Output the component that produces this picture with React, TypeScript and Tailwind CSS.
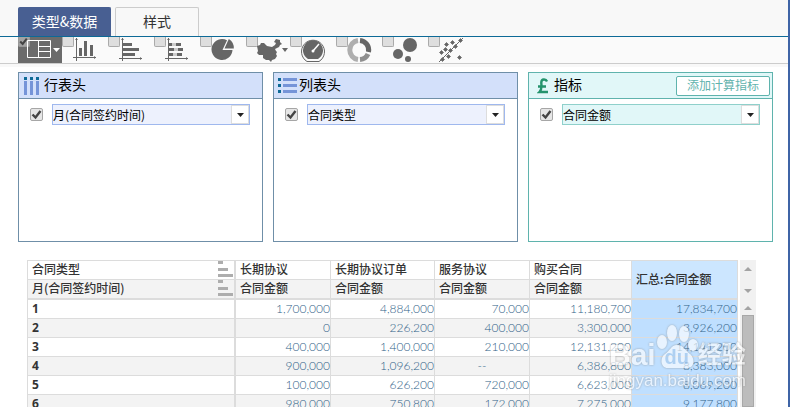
import { useState } from 'react'
import type { ReactNode } from 'react'

const BAR = '#666'

interface ChartType {
  id: string
  label: string
  width: string
  icon: ReactNode
}

const chartTypes: ChartType[] = [
  {
    id: 'table',
    label: '表格',
    width: 'w-11',
    icon: (
      <svg width="34" height="26" viewBox="0 0 34 26" className="ml-[9px]">
        <path d="M.5 3.5h23v17H.5zM11.5 3.500v17M11.5 9.5h12M11.5 14.5h12" fill="none" stroke="#fff" />
        <path d="M26 11h7l-3.500 4z" fill="#fff" />
      </svg>
    ),
  },
  {
    id: 'column',
    label: '柱状图',
    width: 'w-[46px]',
    icon: (
      <svg width="24" height="26" viewBox="0 0 24 26" className="ml-[11px]">
        <path d="M3.5 1v23M0 20.5h23" stroke={BAR} fill="none" />
        <path d="M6 11h3v8H6zM11 4h3v15h-3zM17 8h3v11h-3z" fill={BAR} />
        <path d="M2 3l1.5-2L5 3zM21 19l2 1.5-2 1.5z" fill={BAR} />
      </svg>
    ),
  },
  {
    id: 'bar',
    label: '条形图',
    width: 'w-[46px]',
    icon: (
      <svg width="24" height="26" viewBox="0 0 24 26" className="ml-[11px]">
        <path d="M3.5 1v23M0 21.5h23" stroke={BAR} fill="none" />
        <path d="M4 6h9v3H4zM4 11h16v3H4zM4 16h12v3H4z" fill={BAR} />
        <path d="M2 3l1.5-2L5 3zM21 20l2 1.5-2 1.5z" fill={BAR} />
      </svg>
    ),
  },
  {
    id: 'stacked',
    label: '堆积图',
    width: 'w-[46px]',
    icon: (
      <svg width="24" height="26" viewBox="0 0 24 26" className="ml-[11px]">
        <path d="M3.5 1v23M0 21.5h23" stroke={BAR} fill="none" />
        <path d="M4 6h3v3H4zM11 6h5v3h-5zM4 11h5v3H4zM13 11h5v3h-5zM4 16h4v3H4zM12 16h5v3h-5z" fill={BAR} />
        <path d="M7 6h4v3H7zM9 11h4v3H9zM8 16h4v3H8z" fill="#ccc" />
        <path d="M2 3l1.5-2L5 3zM21 20l2 1.5-2 1.5z" fill={BAR} />
      </svg>
    ),
  },
  {
    id: 'pie',
    label: '饼图',
    width: 'w-[46px]',
    icon: (
      <svg width="24" height="26" viewBox="0 0 24 26" className="ml-[11px]">
        <path d="M11.5 13L16 3.2A10.500 10.500 0 1 0 21.500 13z" fill={BAR} />
        <path d="M13.5 11.5L17.8 2A10.500 10.500 0 0 1 22.800 11.500z" fill={BAR} />
      </svg>
    ),
  },
  {
    id: 'map',
    label: '地图',
    width: 'w-11',
    icon: (
      <svg width="31" height="26" viewBox="0 0 31 26" className="ml-[11px]">
        <path
          d="M0 9l3-1 1-2 3 0 3 3 5 1 3-2 1-2-2-1 2-3 4 1 0 2 2 2-2 1-1 2-4 2 1 2 1 1-1 2 1 2-2 3-3 1-1 2-2-2-3 0-3-2 0-3-4 0-2-2 1-2z"
          fill={BAR}
        />
        <path d="M25 11h6l-3 4z" fill={BAR} />
      </svg>
    ),
  },
  {
    id: 'gauge',
    label: '仪表盘',
    width: 'w-[46px]',
    icon: (
      <svg width="26" height="26" viewBox="0 0 26 26" className="ml-[11px]">
        <path d="M6 24.500A11.500 11.500 0 1 1 18 24.500z" fill="#fafafa" stroke={BAR} />
        <path d="M7 22A10 10 0 1 1 17 22z" fill={BAR} />
        <path d="M12 14L18 7" stroke="#fff" strokeWidth="1.5" />
        <circle cx="12" cy="14" r="1.5" fill="#fff" />
      </svg>
    ),
  },
  {
    id: 'ring',
    label: '环形图',
    width: 'w-[46px]',
    icon: (
      <svg width="26" height="26" viewBox="0 0 26 26" className="ml-[11px]">
        <path d="M11 3.5A9.600 9.600 0 0 0 11 22.500" fill="none" stroke="#aeaeae" strokeWidth="5" />
        <path d="M13 3.500A9.600 9.600 0 0 1 21.500 15" fill="none" stroke={BAR} strokeWidth="5" />
        <path d="M21 17A9.600 9.600 0 0 1 13 22.500" fill="none" stroke="#8f8f8f" strokeWidth="5" />
      </svg>
    ),
  },
  {
    id: 'bubble',
    label: '气泡图',
    width: 'w-[46px]',
    icon: (
      <svg width="26" height="26" viewBox="0 0 26 26" className="ml-[11px]">
        <circle cx="17" cy="8" r="7" fill={BAR} />
        <circle cx="5" cy="17" r="5" fill={BAR} />
        <circle cx="15" cy="22" r="3" fill={BAR} />
      </svg>
    ),
  },
  {
    id: 'scatter',
    label: '散点图',
    width: 'w-[46px]',
    icon: (
      <svg width="26" height="26" viewBox="0 0 26 26" className="ml-[11px]">
        <path d="M0 25L24 1" stroke={BAR} />
        <path
          d="M7.500 5.500l2 2-2 2-2-2zM13.500 3.500l2 2-2 2-2-2zM21.500 1.500l2 2-2 2-2-2zM16.500 7.500l2 2-2 2-2-2zM11.500 11.500l2 2-2 2-2-2zM6.500 10.500l2 2-2 2-2-2zM2.500 13.500l2 2-2 2-2-2zM9.500 17.500l2 2-2 2-2-2zM3.500 20.500l2 2-2 2-2-2zM20.500 18.500l2 2-2 2-2-2z"
          fill={BAR}
          stroke={BAR}
          strokeWidth=".7"
        />
      </svg>
    ),
  },
]

const columns = ['长期协议', '长期协议订单', '服务协议', '购买合同']

const rows = [
  ['1,700,000', '4,884,000', '70,000', '11,180,700', '17,834,700'],
  ['0', '226,200', '400,000', '3,300,000', '3,926,200'],
  ['400,000', '1,400,000', '210,000', '12,131,200', '14,141,200'],
  ['900,000', '1,096,200', '--', '6,386,800', '8,383,000'],
  ['100,000', '626,200', '720,000', '6,623,000', '8,069,200'],
  ['980,000', '750,800', '172,000', '7,275,000', '9,177,800'],
]

function CheckMark({ className }: { className: string }) {
  return (
    <svg viewBox="0 0 11 11" className={className}>
      <path d="M1.5 5.500l3 3L9.500 2" fill="none" stroke="#444" strokeWidth="2.400" />
    </svg>
  )
}

function ChartToolbar() {
  const [selected, setSelected] = useState('table')

  return (
    <div className="flex h-[27px] shrink-0 border-b border-[#ccc] bg-[#fafafa] pl-[18px]">
      {chartTypes.map((type) => {
        const active = selected === type.id
        return (
          <label
            key={type.id}
            title={type.label}
            className={`relative block h-[26px] shrink-0 ${type.width} ${active ? 'bg-[#6b6b6b]' : ''}`}
          >
            <input
              type="checkbox"
              aria-label={type.label}
              checked={active}
              onChange={() => setSelected(type.id)}
              className={`absolute top-0 left-0 h-[10px] w-3 appearance-none rounded-b-xs border border-t-0 ${
                active ? 'border-[#999] bg-[#a3a3a3]' : 'border-[#aaa] bg-[#dedede]'
              }`}
            />
            {active && <CheckMark className="pointer-events-none absolute top-0 left-0 h-[9px] w-[11px]" />}
            <span className="relative block">{type.icon}</span>
          </label>
        )
      })}
    </div>
  )
}

function RowIcon() {
  return (
    <svg width="17" height="20" viewBox="0 0 17 20">
      <path d="M2.500 5v14M8.500 5v14M14.500 5v14" stroke="#7594d8" strokeWidth="3" />
      <path d="M1 1h3v3H1zM7 1h3v3H7zM13 1h3v3h-3z" fill="#0d6a97" />
    </svg>
  )
}

function ColumnIcon() {
  return (
    <svg width="20" height="20" viewBox="0 0 20 20">
      <path d="M5 3.500h14M5 9.500h14M5 15.500h14" stroke="#7594d8" strokeWidth="3" />
      <path d="M0 2h3v3H0zM0 8h3v3H0zM0 14h3v3H0z" fill="#0d6a97" />
    </svg>
  )
}

function PoundIcon() {
  return (
    <svg width="12" height="16" viewBox="0 0 12 16">
      <path
        d="M10 3.500C9 .8 4.300.6 4.300 4.500c0 3 1.200 6.500-1.800 9.500H11M1 8.500h8"
        fill="none"
        stroke="#23936c"
        strokeWidth="2.400"
      />
    </svg>
  )
}

interface FieldPanelProps {
  title: string
  field: string
  icon: ReactNode
  tone?: 'blue' | 'teal'
  action?: ReactNode
}

function FieldPanel({ title, field, icon, tone = 'blue', action }: FieldPanelProps) {
  const teal = tone === 'teal'
  const [enabled, setEnabled] = useState(true)

  return (
    <section className={`h-[170px] border bg-white ${teal ? 'border-[#5fb3ad]' : 'border-[#6f8fa8]'}`}>
      <header
        className={`flex h-[26px] items-center border-b pr-[2px] ${
          teal ? 'border-[#5fb3ad] bg-[#e1f7f8]' : 'border-[#6f8fa8] bg-[#d3e0fa]'
        }`}
      >
        <span className={`flex w-[25px] ${teal ? 'pl-2' : 'pl-1'}`}>{icon}</span>
        <h2 className="flex-1 pb-[3px] text-sm leading-5 text-black">{title}</h2>
        {action}
      </header>
      <div className="flex items-center pt-[5px] pr-3 pl-[11px]">
        <span className="relative mr-[9px] h-[13px] w-[13px] shrink-0">
          <input
            type="checkbox"
            aria-label={`启用${field}`}
            checked={enabled}
            onChange={(e) => setEnabled(e.target.checked)}
            className="block h-[13px] w-[13px] appearance-none rounded-xs border border-[#a6a6a6] bg-[#e6e6e6]"
          />
          {enabled && <CheckMark className="pointer-events-none absolute inset-px h-[11px] w-[11px]" />}
        </span>
        <span className="relative flex-1">
          <select
            aria-label={title}
            className={`block h-[21px] w-full appearance-none border text-xs text-black ${
              teal ? 'border-[#8fd0cb] bg-[#e1f7f8]' : 'border-[#9fb8ee] bg-[#edf1fd]'
            }`}
          >
            <option>{field}</option>
          </select>
          <span className="pointer-events-none absolute inset-y-px right-px flex w-[18px] items-center justify-center border border-[#ddd] bg-white">
            <svg width="7" height="4" viewBox="0 0 7 4">
              <path d="M0 0h7L3.500 4z" fill="#222" />
            </svg>
          </span>
        </span>
      </div>
    </section>
  )
}

function SortBars() {
  return (
    <svg width="15" height="17" viewBox="0 0 15 17" className="shrink-0">
      <path d="M0 0h5v3H0zM0 7h10v3H0zM0 13h15v3H0z" fill="#adadad" />
    </svg>
  )
}

function PivotTable() {
  return (
    <table className="w-full table-fixed border-separate border-spacing-0 border-t border-l border-[#dcdcdc] text-xs leading-[18px] text-[#333]">
      <colgroup>
        <col className="w-[208px]" />
        <col className="w-[95px]" />
        <col className="w-[104px]" />
        <col className="w-[95px]" />
        <col className="w-[102px]" />
        <col className="w-[106px]" />
      </colgroup>
      <thead className="text-left">
        <tr>
          <th className="h-[19px] border-r-2 border-b border-[#dcdcdc] bg-white p-0 font-medium">
            <div className="flex h-[18px] justify-between pr-px pl-1 leading-4">
              合同类型
              <SortBars />
            </div>
          </th>
          {columns.map((name) => (
            <th
              key={name}
              className="h-[19px] border-r border-b border-[#dcdcdc] bg-white pt-0 pr-0 pb-[2px] pl-1 leading-4 font-medium"
            >
              {name}
            </th>
          ))}
          <th
            rowSpan={2}
            className="border-r border-b-2 border-[#dcdcdc] bg-[#cce6ff] pt-0 pr-0 pb-[2px] pl-1 leading-4 font-medium"
          >
            汇总:合同金额
          </th>
        </tr>
        <tr>
          <th className="h-5 border-r-2 border-b-2 border-[#dcdcdc] bg-[#f3f3f3] p-0 font-medium">
            <div className="flex h-[18px] justify-between pr-px pl-1 leading-4">
              月(合同签约时间)
              <SortBars />
            </div>
          </th>
          {columns.map((name) => (
            <th
              key={name}
              className="h-5 border-r border-b-2 border-[#dcdcdc] bg-[#f3f3f3] pt-0 pr-0 pb-[2px] pl-1 leading-4 font-medium"
            >
              合同金额
            </th>
          ))}
        </tr>
      </thead>
      <tbody>
        {rows.map((row, i) => (
          <tr key={i} className={i % 2 ? 'bg-[#f3f3f3]' : 'bg-white'}>
            <th className="h-[19px] border-r-2 border-b border-[#dcdcdc] py-0 pr-0 pl-1 text-left font-['Noto_Sans',sans-serif] font-bold">
              {i + 1}
            </th>
            {row.map((value, j) => (
              <td
                key={j}
                className={`h-[19px] border-r border-b border-[#dcdcdc] p-0 font-['Lato',sans-serif] font-light text-[#2f6187] ${
                  value === '--' ? 'text-center' : 'text-right'
                } ${j === 4 ? 'bg-[#bfdfff]' : ''}`}
              >
                {value}
              </td>
            ))}
          </tr>
        ))}
      </tbody>
    </table>
  )
}

function ScrollTrack() {
  return (
    <div className="ml-[2px] flex w-4 shrink-0 flex-col items-center bg-[#f1f1f1] pt-[7px]">
      <svg width="8" height="46" viewBox="0 0 8 46">
        <path d="M0 4h8L4 0zM0 22h8l-4 4zM0 43h8l-4-4z" fill="#a3a3a3" />
      </svg>
      <div className="mt-[2px] w-3 flex-1 border border-[#a8a8a8] bg-[#bcbcbc]" />
    </div>
  )
}

function Watermark() {
  return (
    <div className="pointer-events-none absolute right-[42px] bottom-4 font-['Liberation_Sans','Noto_Sans_CJK_SC',sans-serif] text-white opacity-65 drop-shadow-[0_0_1px_#888]">
      <div className="flex items-end">
        <span className="text-[30px] leading-8 font-bold">Bai</span>
        <span className="relative flex h-[46px] w-[42px] items-end justify-center">
          <svg width="42" height="46" viewBox="0 0 42 46" className="absolute inset-0" fill="#fff">
            <ellipse cx="6" cy="17" rx="5" ry="7" />
            <ellipse cx="16" cy="8" rx="5" ry="8" />
            <ellipse cx="28" cy="9" rx="5" ry="8" />
            <ellipse cx="37" cy="20" rx="5" ry="6" />
            <path d="M21 20c-6 0-7 6-12 9s-5 14 3 14h19c8 0 8-10 3-14s-7-9-13-9z" />
          </svg>
          <span className="relative text-xl leading-7 font-bold text-[#a5c9ec]">du</span>
        </span>
        <span className="text-2xl leading-8 font-bold">经验</span>
      </div>
      <div className="text-[17px] leading-5">jingyan.baidu.com</div>
    </div>
  )
}

export default function App() {
  const [tab, setTab] = useState('data')
  const activeTab = 'border-[#485f92] bg-[#485f92] text-white'
  const idleTab = 'border-[#ccc] bg-[#f8f8f8] text-[#333]'

  return (
    <div className="relative flex h-screen flex-col overflow-hidden border-r-2 border-[#3f64a6] bg-white font-['Noto_Sans_CJK_SC',sans-serif]">
      {/* Tabs */}
      <div className="flex h-[37px] shrink-0 items-end gap-1 border-b border-[#0d6a97] bg-[#f8f8f8] pl-[18px]">
        <button
          type="button"
          onClick={() => setTab('data')}
          className={`h-[29px] w-[93px] rounded-t-xs border border-b-0 pb-[2px] text-sm ${tab === 'data' ? activeTab : idleTab}`}
        >
          类型&amp;数据
        </button>
        <button
          type="button"
          onClick={() => setTab('style')}
          className={`h-[29px] w-[84px] rounded-t-xs border border-b-0 pb-[2px] text-sm ${tab === 'style' ? activeTab : idleTab}`}
        >
          样式
        </button>
      </div>

      <ChartToolbar />
      <div className="h-[3px] shrink-0 bg-[#f8f8f8]" />

      {/* Field panels */}
      <div className="grid shrink-0 grid-cols-3 gap-[10px] pt-[5px] pr-[15px] pl-[18px]">
        <FieldPanel title="行表头" field="月(合同签约时间)" icon={<RowIcon />} />
        <FieldPanel title="列表头" field="合同类型" icon={<ColumnIcon />} />
        <FieldPanel
          title="指标"
          field="合同金额"
          icon={<PoundIcon />}
          tone="teal"
          action={
            <button
              type="button"
              className="h-5 rounded-xs border border-[#5fb3ad] bg-white px-[10px] pb-[2px] text-xs leading-4 text-[#5fb3ad]"
            >
              添加计算指标
            </button>
          }
        />
      </div>

      {/* Pivot table */}
      <div className="flex min-h-0 flex-1 overflow-hidden pt-[18px] pr-8 pl-[27px]">
        <div className="min-w-0 flex-1">
          <PivotTable />
        </div>
        <ScrollTrack />
      </div>

      <Watermark />
    </div>
  )
}
